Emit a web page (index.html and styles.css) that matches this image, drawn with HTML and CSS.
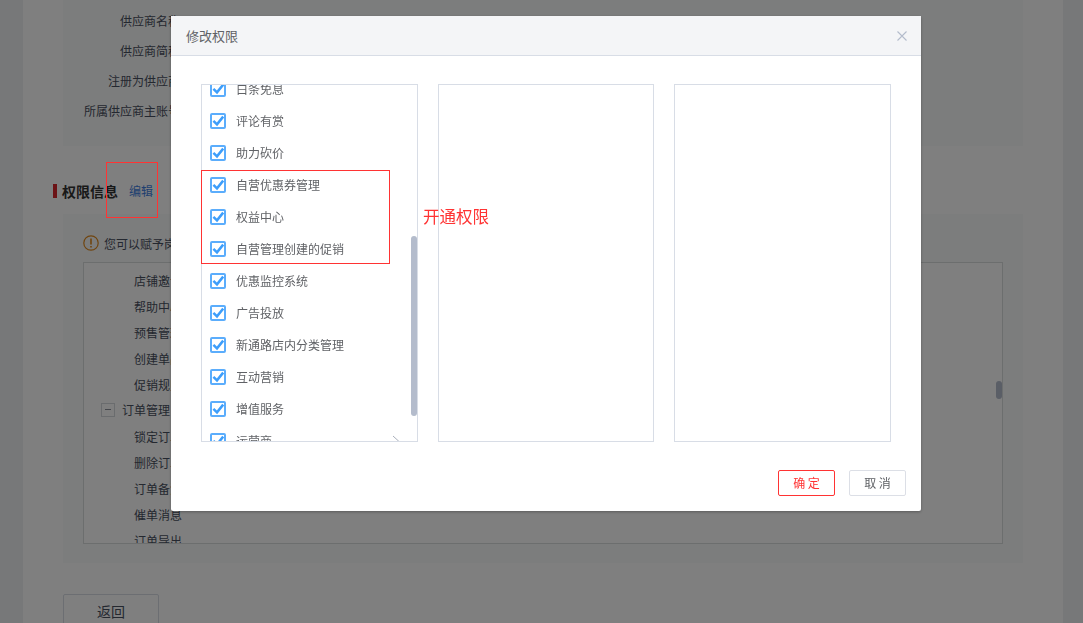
FILE: index.html
```html
<!DOCTYPE html>
<html lang="zh-CN">
<head>
<meta charset="utf-8">
<title>修改权限</title>
<link rel="stylesheet" href="styles.css">
</head>
<body>
<svg class="sprite" width="0" height="0" aria-hidden="true">
  <symbol id="tick" viewBox="0 0 16 16"><path d="M3.4 7.8 L7 11.4 L13.2 3.6" stroke="#3d9efb" stroke-width="2.5" fill="none"/></symbol>
</svg>
<main class="page">
  <section class="panel panel-info">
    <div class="info-row">供应商名称：</div>
    <div class="info-row">供应商简称：</div>
    <div class="info-row">注册为供应商：</div>
    <div class="info-row">所属供应商主账号：</div>
  </section>
  <div class="heading"><h2 class="heading-title">权限信息</h2><a class="heading-link">编辑</a></div>
  <section class="panel panel-perm">
    <div class="warn">
      <svg class="warn-icon" width="16" height="16" viewBox="0 0 16 16"><circle cx="8" cy="8" r="7.2" fill="none" stroke="#e08a1e" stroke-width="1.2"/><path d="M8 3.6V9.6M8 11V12.6" stroke="#e08a1e" stroke-width="1.6" fill="none"/></svg>
      <span>您可以赋予岗位以下权限</span>
    </div>
    <div class="tree">
      <div class="tree-leaf">店铺邀请</div>
      <div class="tree-leaf">帮助中心</div>
      <div class="tree-leaf">预售管理</div>
      <div class="tree-leaf">创建单品</div>
      <div class="tree-leaf">促销规则</div>
      <div class="tree-group"><span class="tree-toggle"></span>订单管理</div>
      <div class="tree-leaf">锁定订单</div>
      <div class="tree-leaf">删除订单</div>
      <div class="tree-leaf">订单备注</div>
      <div class="tree-leaf">催单消息</div>
      <div class="tree-leaf">订单导出</div>
      <div class="tree-thumb"></div>
    </div>
  </section>
  <button class="back-btn">返回</button>
</main>

<div class="overlay"></div>
<div class="modal">
  <header class="modal-head">
    <span class="modal-title">修改权限</span>
    <svg class="modal-close" width="12" height="12" viewBox="0 0 12 12"><path d="M1.5 1.5 L10.5 10.5 M10.5 1.5 L1.5 10.5" stroke="#b4bccc" stroke-width="1.1" fill="none"/></svg>
  </header>
  <div class="modal-body">
    <div class="col">
      <ul class="check-list">
        <li class="check-item"><span class="box"><svg width="16" height="16"><use href="#tick"/></svg></span>白条免息</li>
        <li class="check-item"><span class="box"><svg width="16" height="16"><use href="#tick"/></svg></span>评论有赏</li>
        <li class="check-item"><span class="box"><svg width="16" height="16"><use href="#tick"/></svg></span>助力砍价</li>
        <li class="check-item"><span class="box"><svg width="16" height="16"><use href="#tick"/></svg></span>自营优惠券管理</li>
        <li class="check-item"><span class="box"><svg width="16" height="16"><use href="#tick"/></svg></span>权益中心</li>
        <li class="check-item"><span class="box"><svg width="16" height="16"><use href="#tick"/></svg></span>自营管理创建的促销</li>
        <li class="check-item"><span class="box"><svg width="16" height="16"><use href="#tick"/></svg></span>优惠监控系统</li>
        <li class="check-item"><span class="box"><svg width="16" height="16"><use href="#tick"/></svg></span>广告投放</li>
        <li class="check-item"><span class="box"><svg width="16" height="16"><use href="#tick"/></svg></span>新通路店内分类管理</li>
        <li class="check-item"><span class="box"><svg width="16" height="16"><use href="#tick"/></svg></span>互动营销</li>
        <li class="check-item"><span class="box"><svg width="16" height="16"><use href="#tick"/></svg></span>增值服务</li>
        <li class="check-item"><span class="box"><svg width="16" height="16"><use href="#tick"/></svg></span>运营商<svg class="chevron" width="8" height="12" viewBox="0 0 8 12"><path d="M1 1 L6.5 6 L1 11" stroke="#a9afbb" fill="none"/></svg></li>
      </ul>
      <div class="list-thumb"></div>
    </div>
    <div class="col"></div>
    <div class="col"></div>
  </div>
  <footer class="modal-foot">
    <button class="btn btn-ok">确 定</button>
    <button class="btn btn-cancel">取 消</button>
  </footer>
</div>

<div class="mark mark-edit"></div>
<div class="mark mark-items"></div>
<div class="mark-label">开通权限</div>
</body>
</html>
```

FILE: styles.css
```css
* { box-sizing: border-box; }
html, body { margin: 0; height: 623px; overflow: hidden; }
body {
  background: #eef0f3;
  font-family: "Noto Sans CJK SC", "Noto Sans", sans-serif;
  font-size: 12px;
  color: #515a6e;
  position: relative;
}
.sprite { position: absolute; }
.page {
  margin: 0 20px 0 23px;
  height: 623px;
  padding: 0 40px;
  background: #fff;
}
.panel { background: #f9fafa; }
.panel-info { padding: 6px 0 20px; height: 146px; }
.info-row {
  height: 30px;
  line-height: 30px;
  width: 129px;
  text-align: right;
  color: #495060;
  white-space: nowrap;
}
.heading {
  display: flex;
  align-items: center;
  height: 14px;
  margin: 38px 0 16px -10px;
  border-left: 4px solid #d9262c;
  padding-left: 5px;
}
.heading-title { margin: 0 0 1px; font-size: 14px; line-height: 20px; font-weight: 700; color: #333; }
.heading-link { margin-left: 11px; color: #3e7fe0; line-height: 20px; }
.panel-perm { height: 349px; padding: 20px 20px 19px; }
.warn { display: flex; align-items: center; gap: 5px; height: 18px; margin-bottom: 10px; color: #495060; }
.warn-icon { flex: none; }
.tree {
  position: relative;
  height: 282px;
  padding-top: 5px;
  border: 1px solid #d8dcdc;
  background: #fff;
  overflow: hidden;
  color: #495060;
}
.tree-leaf { height: 26px; line-height: 25px; padding-left: 50px; }
.tree-group { height: 26px; line-height: 24px; display: flex; align-items: center; padding: 0 0 3px 17px; }
.tree-toggle {
  position: relative;
  width: 14px;
  height: 14px;
  margin-right: 7px;
  border: 1px solid #d5d8dc;
  background: #fff;
}
.tree-toggle::after {
  content: "";
  position: absolute;
  left: 3px;
  top: 5px;
  width: 6px;
  height: 1px;
  background: #8a8f98;
}
.tree-thumb {
  position: absolute;
  right: 0;
  top: 118px;
  width: 6px;
  height: 18px;
  border-radius: 3px;
  background: #b4bccc;
}
.back-btn {
  display: block;
  margin-top: 31px;
  width: 96px;
  height: 40px;
  padding: 0 0 6px;
  background: #fff;
  border: 1px solid #d8dce5;
  border-radius: 2px;
  font: inherit;
  font-size: 14px;
  color: #495060;
}

.overlay { position: fixed; inset: 0; background: rgba(0, 0, 0, .5); }
.modal {
  position: fixed;
  left: 171px;
  top: 16px;
  width: 750px;
  height: 495px;
  display: flex;
  flex-direction: column;
  background: #fff;
  border-radius: 2px;
  box-shadow: 0 1px 3px rgba(0, 0, 0, .3);
}
.modal-head {
  flex: none;
  height: 40px;
  display: flex;
  align-items: center;
  justify-content: space-between;
  padding: 0 13px 0 15px;
  background: #f4f5f7;
  border-bottom: 1px solid #d8dde6;
}
.modal-title { font-size: 13px; color: #606266; }
.modal-body {
  flex: none;
  display: grid;
  grid-template-columns: repeat(3, 1fr);
  column-gap: 20px;
  padding: 28px 30px;
}
.col {
  position: relative;
  height: 358px;
  border: 1px solid #d8dde6;
  overflow: hidden;
}
.check-list { list-style: none; margin: -12px 0 0; padding: 0; }
.check-item {
  position: relative;
  display: flex;
  align-items: center;
  height: 32px;
  line-height: 30px;
  padding-left: 8px;
  color: #606266;
  white-space: nowrap;
}
.box {
  flex: none;
  width: 16px;
  height: 16px;
  margin-right: 10px;
  border: 2px solid #5badfc;
  border-radius: 2px;
  background: #fff;
}
.box svg { display: block; margin: -2px; overflow: visible; }
.chevron { position: absolute; left: 190px; top: 10px; }
.list-thumb {
  position: absolute;
  right: 0;
  top: 151px;
  width: 6px;
  height: 180px;
  border-radius: 3px;
  background: #b4bccc;
}
.modal-foot {
  flex: 1;
  display: flex;
  justify-content: flex-end;
  gap: 14px;
  padding: 0 15px;
}
.btn {
  width: 57px;
  height: 26px;
  padding: 0;
  background: #fff;
  border-radius: 2px;
  font: inherit;
  line-height: 24px;
}
.btn-ok { border: 1px solid #f33; color: #f33; }
.btn-cancel { border: 1px solid #dcdfe6; color: #606266; }

.mark { position: absolute; border: 1px solid #f33; }
.mark-edit { left: 106px; top: 162px; width: 52px; height: 56px; }
.mark-items { left: 201px; top: 170px; width: 189px; height: 94px; }
.mark-label { position: absolute; left: 423px; top: 204px; font-size: 16.5px; line-height: 24px; color: #f33; }
```
